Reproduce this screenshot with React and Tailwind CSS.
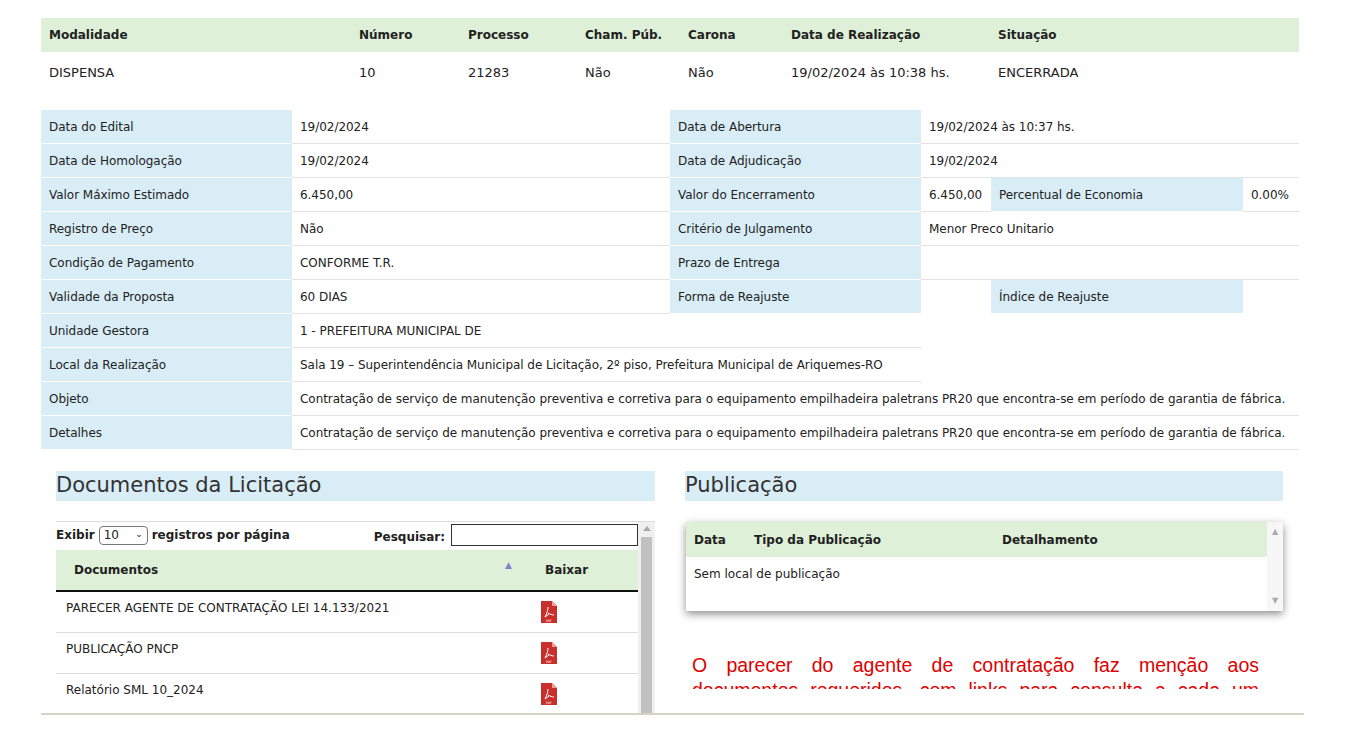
const F = { fontFamily: '"DejaVu Sans", Verdana, sans-serif' };

function Pdf() {
  return (
    <svg width="18" height="22" viewBox="0 0 18 22">
      <path d="M1 0h11l5 5v17H1z" fill="#c9302c" />
      <path d="M12 0v5h5z" fill="#f2a0a0" />
      <path d="M5 16c2-4 3-7 3-10M8 12c2 1 4 2 6 2M5 16l4-3" stroke="#fff" strokeWidth="1" fill="none" />
      <text x="6" y="20.5" fontSize="3" fill="#fff">PDF</text>
    </svg>
  );
}

const L = "bg-[#d9edf7] px-2 flex items-center border-b border-white";
const V = "px-2 flex items-center border-b border-[#e3e3e3]";

function Row({ children }) {
  return <div className="flex h-[34px]">{children}</div>;
}

export default function App() {
  return (
    <div className="w-[1354px] h-[736px] bg-white relative overflow-hidden text-[12px] text-[#222]" style={F}>
      <div className="ml-[41px] mt-[18px] w-[1258px]">
        <div className="flex h-[34px] bg-[#dff0d8] font-bold items-center text-[12px]">
          <div className="w-[318px] pl-2">Modalidade</div>
          <div className="w-[109px]">Número</div>
          <div className="w-[117px]">Processo</div>
          <div className="w-[103px]">Cham. Púb.</div>
          <div className="w-[103px]">Carona</div>
          <div className="w-[207px]">Data de Realização</div>
          <div>Situação</div>
        </div>
        <div className="flex h-[38px] items-center text-[13px] pt-[3px]">
          <div className="w-[318px] pl-2">DISPENSA</div>
          <div className="w-[109px]">10</div>
          <div className="w-[117px]">21283</div>
          <div className="w-[103px]">Não</div>
          <div className="w-[103px]">Não</div>
          <div className="w-[207px]">19/02/2024 às 10:38 hs.</div>
          <div>ENCERRADA</div>
        </div>
      </div>

      <div className="ml-[41px] mt-[20px] w-[1258px] tracking-[-0.04px]">
        <Row><div className={`${L} w-[251px]`}>Data do Edital</div><div className={`${V} w-[378px]`}>19/02/2024</div><div className={`${L} w-[251px]`}>Data de Abertura</div><div className={`${V} flex-1`}>19/02/2024 às 10:37 hs.</div></Row>
        <Row><div className={`${L} w-[251px]`}>Data de Homologação</div><div className={`${V} w-[378px]`}>19/02/2024</div><div className={`${L} w-[251px]`}>Data de Adjudicação</div><div className={`${V} flex-1`}>19/02/2024</div></Row>
        <Row><div className={`${L} w-[251px]`}>Valor Máximo Estimado</div><div className={`${V} w-[378px]`}>6.450,00</div><div className={`${L} w-[251px]`}>Valor do Encerramento</div><div className={`${V} w-[70px]`}>6.450,00</div><div className={`${L} w-[252px]`}>Percentual de Economia</div><div className={`${V} flex-1`}>0.00%</div></Row>
        <Row><div className={`${L} w-[251px]`}>Registro de Preço</div><div className={`${V} w-[378px]`}>Não</div><div className={`${L} w-[251px]`}>Critério de Julgamento</div><div className={`${V} flex-1`}>Menor Preco Unitario</div></Row>
        <Row><div className={`${L} w-[251px]`}>Condição de Pagamento</div><div className={`${V} w-[378px]`}>CONFORME T.R.</div><div className={`${L} w-[251px]`}>Prazo de Entrega</div><div className={`${V} flex-1`}></div></Row>
        <Row><div className={`${L} w-[251px]`}>Validade da Proposta</div><div className={`${V} w-[378px]`}>60 DIAS</div><div className={`${L} w-[251px]`}>Forma de Reajuste</div><div className="w-[70px]"></div><div className={`${L} w-[252px]`}>Índice de Reajuste</div><div className="flex-1"></div></Row>
        <Row><div className={`${L} w-[251px]`}>Unidade Gestora</div><div className={`${V} w-[629px]`}>1 - PREFEITURA MUNICIPAL DE</div></Row>
        <Row><div className={`${L} w-[251px]`}>Local da Realização</div><div className={`${V} w-[629px]`}>Sala 19 – Superintendência Municipal de Licitação, 2º piso, Prefeitura Municipal de Ariquemes-RO</div></Row>
        <Row><div className={`${L} w-[251px]`}>Objeto</div><div className={`${V} flex-1 whitespace-nowrap`}>Contratação de serviço de manutenção preventiva e corretiva para o equipamento empilhadeira paletrans PR20 que encontra-se em período de garantia de fábrica.</div></Row>
        <Row><div className={`${L} w-[251px]`}>Detalhes</div><div className={`${V} flex-1 whitespace-nowrap`}>Contratação de serviço de manutenção preventiva e corretiva para o equipamento empilhadeira paletrans PR20 que encontra-se em período de garantia de fábrica.</div></Row>
      </div>

      <div className="flex mt-[21px] ml-[56px] gap-[30px]">
        <div className="w-[599px]">
          <div className="h-[30px] bg-[#d9edf7] text-[21px] flex items-center text-[#333]">Documentos da Licitação</div>
          <div className="mt-[20px] h-[194px] overflow-hidden relative border-t border-[#ddd]">
            <div className="absolute right-0 top-0 w-[17px] h-full bg-[#f0f0f0]">
              <div className="mx-auto mt-[4px] w-0 h-0 border-x-[4px] border-x-transparent border-b-[5px] border-b-[#aaa]" />
              <div className="mx-[3px] mt-[6px] h-[200px] bg-[#c1c1c1]" />
            </div>
            <div className="w-[582px]">
              <div className="flex items-center h-[26px] font-bold text-[12px]">
                Exibir
                <span className="mx-1 border border-[#767676] rounded-sm px-1 h-[19px] w-[49px] flex items-center justify-between font-normal">10 <span className="text-[9px]">⌄</span></span>
                registros por página
                <span className="ml-auto mr-[6px] mt-[3px]">Pesquisar:</span>
                <span className="w-[187px] h-[22px] border border-[#333]"></span>
              </div>
              <div className="flex h-[42px] mt-[2px] bg-[#dff0d8] items-center font-bold border-b-2 border-[#111]">
                <div className="pl-[18px] w-[449px]">Documentos</div>
                <div className="text-[#8080d0] text-[9px] w-[40px] -mt-2">▲</div>
                <div>Baixar</div>
              </div>
              {["PARECER AGENTE DE CONTRATAÇÃO LEI 14.133/2021", "PUBLICAÇÃO PNCP", "Relatório SML 10_2024"].map((t) => (
                <div key={t} className="flex h-[41px] border-b border-[#ddd] items-center">
                  <div className="pl-[10px] w-[484px] -mt-2">{t}</div>
                  <Pdf />
                </div>
              ))}
            </div>
          </div>
        </div>
        <div className="w-[598px]">
          <div className="h-[30px] bg-[#d9edf7] text-[21px] flex items-center text-[#333]">Publicação</div>
          <div className="mt-[21px] h-[89px] w-[597px] ml-[1px] shadow-[0_3px_8px_rgba(0,0,0,0.45)] relative bg-white">
            <div className="absolute right-0 top-0 w-[16px] h-full bg-[#f7f7f7] text-[#aaa] text-[8px] flex flex-col items-center justify-between py-1"><span>▲</span><span>▼</span></div>
            <div className="w-[581px]">
              <div className="flex h-[35px] bg-[#dff0d8] items-center font-bold">
                <div className="pl-2 w-[68px]">Data</div>
                <div className="w-[248px]">Tipo da Publicação</div>
                <div>Detalhamento</div>
              </div>
              <div className="pl-2 h-[34px] flex items-center">Sem local de publicação</div>
            </div>
          </div>
          <div className="mt-[42px] ml-[7px] w-[567px] h-[36px] overflow-hidden text-[#e00000] text-[19.5px] leading-[25px] text-justify" style={{ fontFamily: '"Liberation Sans", Arial, sans-serif' }}>
            O parecer do agente de contratação faz menção aos documentos requeridos, com links para consulta a cada um deles.
          </div>
        </div>
      </div>
      <div className="absolute left-[41px] top-[713px] w-[1263px] h-[2px] bg-[#d6d3c4]" />
    </div>
  );
}
